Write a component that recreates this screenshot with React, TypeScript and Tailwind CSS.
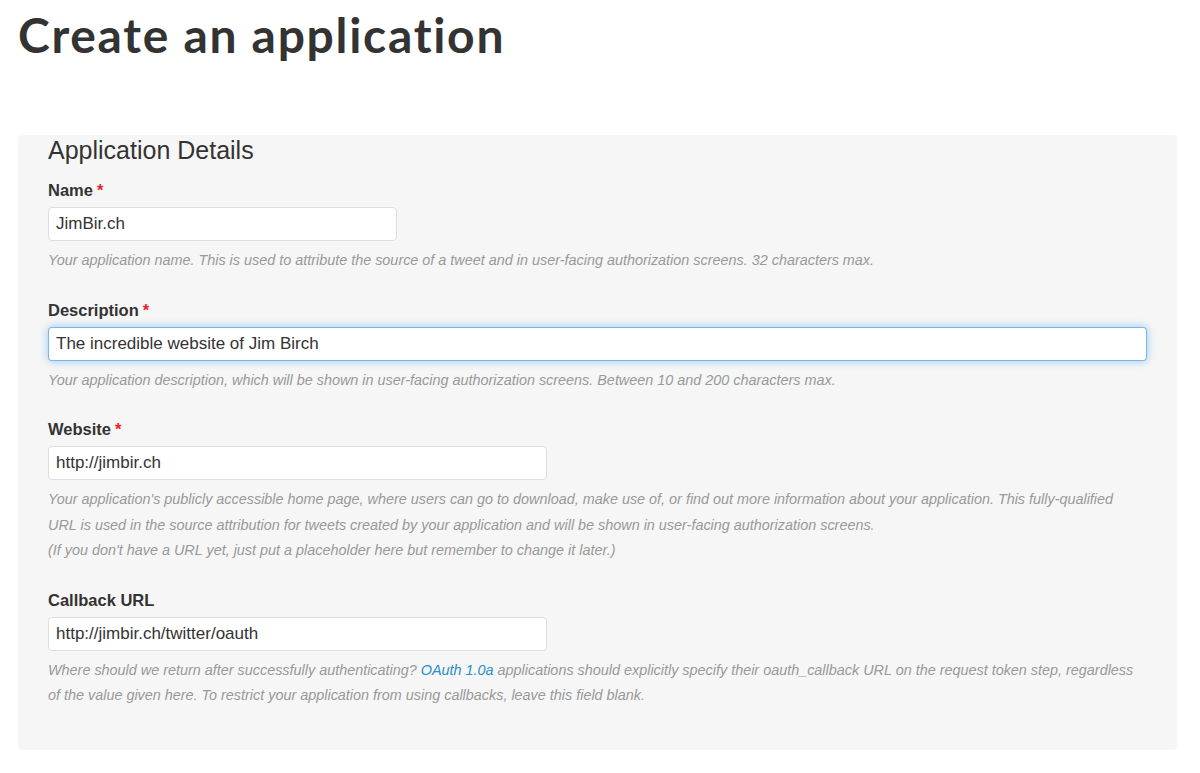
import React from "react";

const helv = { fontFamily: '"Liberation Sans", Arial, sans-serif' };

function Field({
  label,
  required,
  value,
  width,
  focused,
  children,
}: {
  label: string;
  required?: boolean;
  value: string;
  width: string;
  focused?: boolean;
  children: React.ReactNode;
}) {
  return (
    <div className="mt-[26px] first:mt-0">
      <label className="block text-[16.5px] leading-[20px] font-bold text-[#333]">
        {label}
        {required && <span className="text-[#e22] ml-[4px]">*</span>}
      </label>
      <input
        readOnly
        value={value}
        className={`mt-[7px] block h-[34px] ${width} rounded-[4px] bg-white px-[7px] text-[17px] text-[#333] outline-none ${
          focused
            ? "border border-[rgba(82,168,236,0.8)] shadow-[0_0_8px_rgba(82,168,236,0.6)]"
            : "border border-[#ddd]"
        }`}
        style={helv}
      />
      <p className="mt-[7px] text-[14.4px] leading-[25.5px] italic text-[#999]">{children}</p>
    </div>
  );
}

export default function App() {
  return (
    <div className="min-h-screen bg-white" style={helv}>
      <h1
        className="pl-[18px] pt-[5px] text-[48px] leading-[60px] font-bold text-[#333] tracking-[1.7px]"
        style={{ fontFamily: 'Lato, "Open Sans", sans-serif' }}
      >
        Create an application
      </h1>

      <div className="ml-[18px] mr-[23px] mt-[70px] rounded-[4px] bg-[#f6f6f6] px-[30px] pt-[2px] pb-[41px]">
        <h2 className="text-[25px] leading-[26px] text-[#333]">Application Details</h2>

        <div className="mt-[17px]">
          <Field label="Name" required value="JimBir.ch" width="w-[349px]">
            Your application name. This is used to attribute the source of a tweet and in user-facing authorization screens. 32 characters max.
          </Field>

          <Field label="Description" required value="The incredible website of Jim Birch" width="w-full" focused>
            Your application description, which will be shown in user-facing authorization screens. Between 10 and 200 characters max.
          </Field>

          <Field label="Website" required value="http://jimbir.ch" width="w-[499px]">
            Your application's publicly accessible home page, where users can go to download, make use of, or find out more information about your application. This fully-qualified
            <br />
            URL is used in the source attribution for tweets created by your application and will be shown in user-facing authorization screens.
            <br />
            (If you don't have a URL yet, just put a placeholder here but remember to change it later.)
          </Field>

          <Field label="Callback URL" value="http://jimbir.ch/twitter/oauth" width="w-[499px]">
            Where should we return after successfully authenticating?{" "}
            <a className="text-[#2a8fc7]">OAuth 1.0a</a> applications should explicitly specify their oauth_callback URL on the request token step, regardless
            <br />
            of the value given here. To restrict your application from using callbacks, leave this field blank.
          </Field>
        </div>
      </div>
    </div>
  );
}
